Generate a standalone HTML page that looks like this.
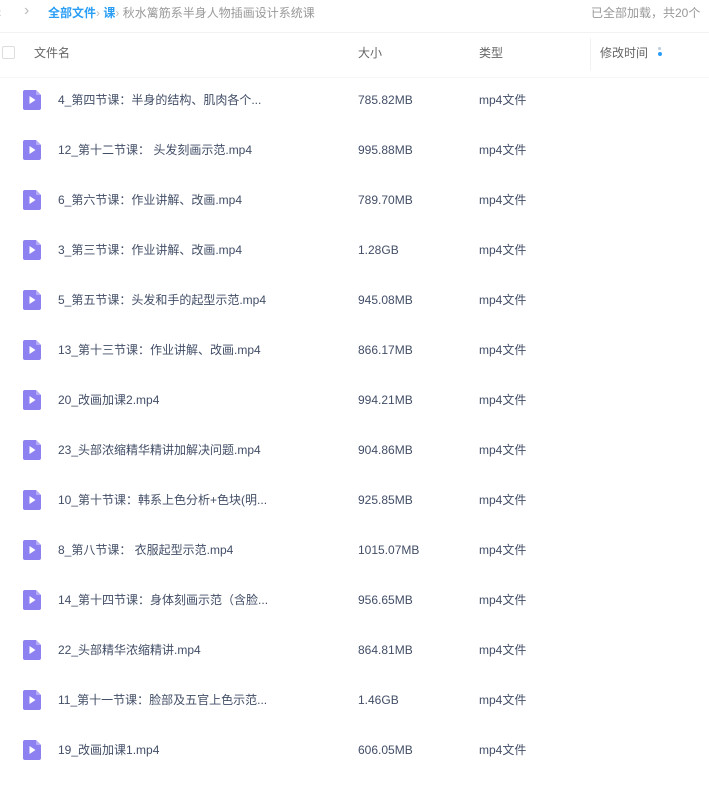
<!DOCTYPE html>
<html><head><meta charset="utf-8"><style>
body{margin:0;width:709px;height:752px;overflow:hidden;background:#fff;font-family:"Liberation Sans","Noto Sans CJK SC",sans-serif;font-size:12px;line-height:16px;color:#424e67;position:relative}
.a{position:absolute;white-space:nowrap}
.row{position:absolute;left:0;width:709px;height:50px}
.row svg{position:absolute;left:23px;top:-10px}
.row span{position:absolute;top:-8px;line-height:16px;height:16px;white-space:nowrap}
.row .n{left:58px}
.row .s{left:358px}
.row .t{left:479px}
</style></head><body>
<div class="a" style="left:-3px;top:4px;color:#ccc;font-size:14px">&lsaquo;</div>
<div class="a" style="left:24px;top:3px;color:#bbb;font-size:16px">&rsaquo;</div>
<div class="a" style="left:48px;top:5px;font-size:12px"><span style="color:#2a9ef5;font-weight:bold">全部文件</span><span style="color:#bbb">›</span> <span style="color:#2a9ef5;font-weight:bold">课</span><span style="color:#bbb">›</span> <span style="color:#999">秋水篱筋系半身人物插画设计系统课</span></div>
<div class="a" style="left:591px;top:5px;color:#999">已全部加载，共20个</div>
<div class="a" style="left:0;top:32px;width:709px;height:1px;background:#f2f2f2"></div>
<div class="a" style="left:2px;top:46px;width:11px;height:11px;border:1px solid #ddd;border-radius:2px"></div>
<div class="a" style="left:34px;top:45px;color:#666">文件名</div>
<div class="a" style="left:358px;top:45px;color:#666">大小</div>
<div class="a" style="left:479px;top:45px;color:#666">类型</div>
<div class="a" style="left:590px;top:38px;width:1px;height:32px;background:#f2f2f2"></div>
<div class="a" style="left:600px;top:45px;color:#666">修改时间</div>
<div class="a" style="left:658px;top:47px;width:3px;height:3px;background:#bcd;border-radius:50%"></div>
<div class="a" style="left:658px;top:52px;width:4px;height:4px;background:#2a9ef5;border-radius:50%"></div>
<div class="a" style="left:0;top:77px;width:709px;height:1px;background:#f7f7f7"></div>
<div id="rows"></div>
<script>
var d=[["4_第四节课：半身的结构、肌肉各个...","785.82MB"],["12_第十二节课： 头发刻画示范.mp4","995.88MB"],["6_第六节课：作业讲解、改画.mp4","789.70MB"],["3_第三节课：作业讲解、改画.mp4","1.28GB"],["5_第五节课：头发和手的起型示范.mp4","945.08MB"],["13_第十三节课：作业讲解、改画.mp4","866.17MB"],["20_改画加课2.mp4","994.21MB"],["23_头部浓缩精华精讲加解决问题.mp4","904.86MB"],["10_第十节课：韩系上色分析+色块(明...","925.85MB"],["8_第八节课： 衣服起型示范.mp4","1015.07MB"],["14_第十四节课：身体刻画示范（含脸...","956.65MB"],["22_头部精华浓缩精讲.mp4","864.81MB"],["11_第十一节课：脸部及五官上色示范...","1.46GB"],["19_改画加课1.mp4","606.05MB"]];
var h="";d.forEach(function(r,i){var y=100+i*50;h+='<div class="row" style="top:'+y+'px"><svg width="18" height="20" viewBox="0 0 18 20"><path d="M2 0H13L18 5V18Q18 20 16 20H2Q0 20 0 18V2Q0 0 2 0Z" fill="#8d80f0"/><path d="M13 0L18 5H14Q13 5 13 4Z" fill="#b7adf7"/><path d="M6.5 6L12.5 10L6.5 14Z" fill="#fff"/></svg><span class="n">'+r[0]+'</span><span class="s">'+r[1]+'</span><span class="t">mp4文件</span></div>'});
document.getElementById("rows").innerHTML=h;
</script>
</body></html>
